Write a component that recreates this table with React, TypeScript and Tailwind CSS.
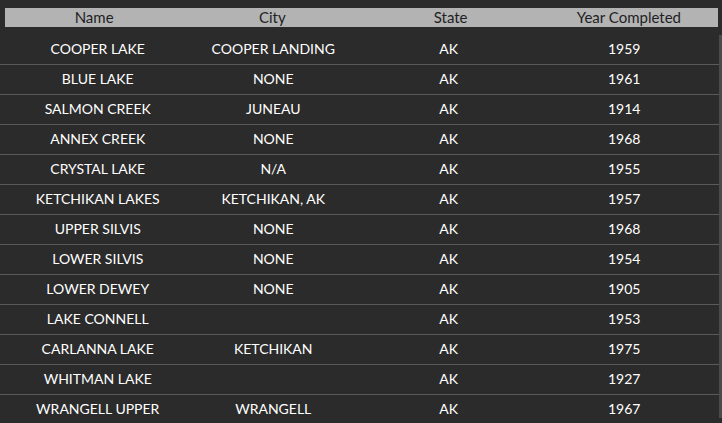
const rows = [
  ["COOPER LAKE", "COOPER LANDING", "AK", "1959"],
  ["BLUE LAKE", "NONE", "AK", "1961"],
  ["SALMON CREEK", "JUNEAU", "AK", "1914"],
  ["ANNEX CREEK", "NONE", "AK", "1968"],
  ["CRYSTAL LAKE", "N/A", "AK", "1955"],
  ["KETCHIKAN LAKES", "KETCHIKAN, AK", "AK", "1957"],
  ["UPPER SILVIS", "NONE", "AK", "1968"],
  ["LOWER SILVIS", "NONE", "AK", "1954"],
  ["LOWER DEWEY", "NONE", "AK", "1905"],
  ["LAKE CONNELL", "", "AK", "1953"],
  ["CARLANNA LAKE", "KETCHIKAN", "AK", "1975"],
  ["WHITMAN LAKE", "", "AK", "1927"],
  ["WRANGELL UPPER", "WRANGELL", "AK", "1967"],
];

const headers = ["Name", "City", "State", "Year Completed"];

export default function App() {
  return (
    <div className="h-[423px] w-[722px] overflow-hidden bg-[#2b2b2b] font-['Lato',sans-serif]">
      {/* header bar */}
      <div className="ml-[5px] mt-[8px] grid h-[19px] w-[713px] grid-cols-4 bg-[#b3b3b3] text-[15px] leading-[19px] text-[#1f1f24]">
        {headers.map((h) => (
          <div key={h} className="text-center">
            {h}
          </div>
        ))}
      </div>

      {/* body + scrollbar */}
      <div className="mt-[8px] flex">
        <div className="w-[719px]">
          {rows.map((r, i) => (
            <div key={i} className="flex h-[30px] items-center border-b border-[#5a5a5a] pb-[2px] pl-[10px]">
              <div className="grid w-[702px] grid-cols-4 text-[14px] text-white">
                {r.map((c, j) => (
                  <div key={j} className="text-center">
                    {c}
                  </div>
                ))}
              </div>
            </div>
          ))}
        </div>
        <div className="h-[383px] w-[3px] bg-[#4a4a4a]" />
      </div>
    </div>
  );
}
